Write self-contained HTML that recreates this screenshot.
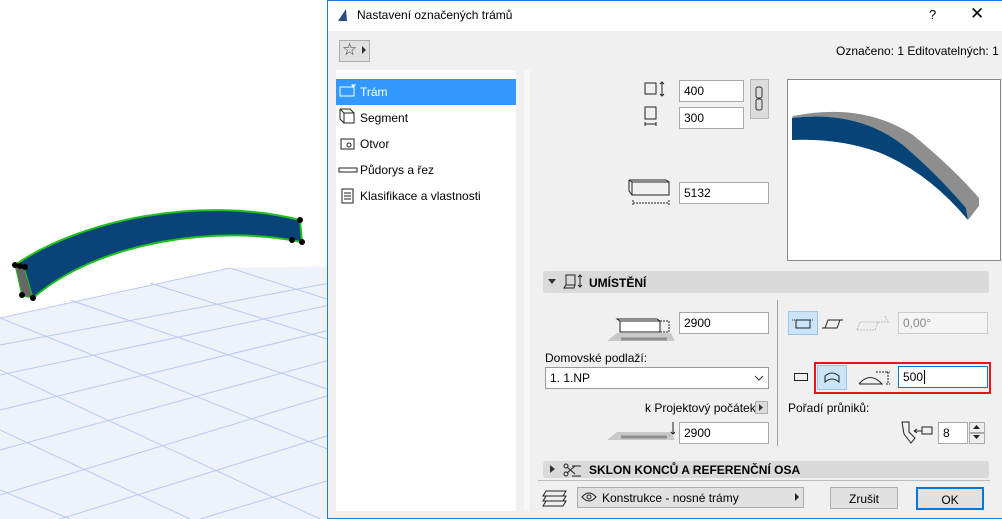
<!DOCTYPE html>
<html><head><meta charset="utf-8"><style>
*{box-sizing:border-box;margin:0;padding:0}
body{width:1002px;height:519px;overflow:hidden;position:relative;background:#fff;font-family:"Liberation Sans",sans-serif;font-size:12px;color:#000}
.a{position:absolute}
.f{position:absolute;background:#fff;border:1px solid #a8a8a8;padding:3px 0 0 4px;font-size:12px;height:22px}
.hdr{position:absolute;background:#dadada;border-radius:3px;font-weight:bold;font-size:12px}
.it{position:absolute;left:336px;width:180px;height:26px;line-height:26px;padding-left:24px;font-size:12px}
.btn{position:absolute;background:#e1e1e1;border:1px solid #adadad;text-align:center;font-size:12px}
</style></head><body>
<svg class="a" style="left:0;top:0" width="330" height="519">
<polygon points="0,318 230,268 330,266 330,519 0,519" fill="#eef2fb"/>
<g stroke="#b9c9f2" stroke-width="1" fill="none">
<line x1="0" y1="318" x2="230" y2="268"/>
<line x1="0" y1="345" x2="330" y2="283"/>
<line x1="0" y1="375" x2="330" y2="305"/>
<line x1="0" y1="410" x2="330" y2="330"/>
<line x1="0" y1="450" x2="330" y2="360"/>
<line x1="0" y1="495" x2="330" y2="395"/>
<line x1="60" y1="519" x2="330" y2="435"/>
<line x1="200" y1="519" x2="330" y2="480"/>
<line x1="230" y1="268" x2="330" y2="300"/>
<line x1="150" y1="283" x2="330" y2="340"/>
<line x1="70" y1="300" x2="330" y2="390"/>
<line x1="0" y1="318" x2="330" y2="450"/>
<line x1="0" y1="370" x2="320" y2="519"/>
<line x1="0" y1="430" x2="190" y2="519"/>
<line x1="0" y1="490" x2="70" y2="519"/>
</g>
<path d="M15,265 C80,220 200,195 300,220 L302,242 C220,225 100,240 33,298 Z" fill="#0a4378" stroke="#1ec21e" stroke-width="2"/>
<path d="M15,265 L24,267 L33,298 L22,296 Z" fill="#666" stroke="#1ec21e"/>
<g fill="#000"><circle cx="15" cy="265" r="3"/><circle cx="20" cy="266" r="3"/><circle cx="25" cy="267" r="3"/><circle cx="22" cy="295" r="3"/><circle cx="33" cy="298" r="3"/><circle cx="300" cy="220" r="3"/><circle cx="292" cy="240" r="3"/><circle cx="302" cy="242" r="3"/></g>
</svg>
<div class="a" style="left:327px;top:0;width:675px;height:519px;background:#f0f0f0;border-left:1px solid #1e7bd6;border-top:1px solid #1e7bd6;border-bottom:1px solid #1e7bd6"></div>
<div class="a" style="left:328px;top:1px;width:674px;height:30px;background:#fff"></div>
<svg class="a" style="left:336px;top:8px" width="14" height="14"><path d="M2,13 L10,1 L11,13 Z" fill="#2b4e7e"/></svg>
<div class="a" style="left:357px;top:8px;font-size:12px">Nastavení označených trámů</div>
<div class="a" style="left:929px;top:7px;font-size:13px">?</div>
<div class="a" style="left:970px;top:4px;font-size:17px">✕</div>
<div class="a" style="left:339px;top:40px;width:31px;height:22px;border:1px solid #adadad;background:#e1e1e1"></div>
<div class="a" style="left:342px;top:40px;font-size:17px;color:#333">☆</div>
<svg class="a" style="left:362px;top:46px" width="5" height="8"><path d="M0,0 L4,4 L0,8Z" fill="#333"/></svg>
<div class="a" style="left:836px;top:44px;font-size:12px">Označeno: 1 Editovatelných: 1</div>
<div class="a" style="left:336px;top:70px;width:180px;height:441px;background:#fff"></div>
<div class="a" style="left:524px;top:70px;width:6px;height:441px;background:#f7f7f7"></div>
<div class="it" style="top:79px;background:#3399ff;color:#fff">Trám</div>
<div class="it" style="top:105px">Segment</div>
<div class="it" style="top:131px">Otvor</div>
<div class="it" style="top:157px">Půdorys a řez</div>
<div class="it" style="top:183px">Klasifikace a vlastnosti</div>
<svg class="a" style="left:338px;top:82px" width="22" height="128" fill="none" stroke="#222">
<rect x="2" y="5" width="14" height="9" stroke="#fff"/><path d="M14,3 l3,0 l-1.5,2z" fill="#fff" stroke="#fff"/>
<rect x="6" y="31" width="10" height="10"/><path d="M2,27 l4,4 M2,27 v10 l4,4 M2,27 h10 l4,4"/>
<rect x="3" y="57" width="13" height="10"/><circle cx="11" cy="63" r="2"/>
<rect x="1" y="86" width="18" height="4"/>
<rect x="4" y="107" width="11" height="14"/><path d="M6,111h7M6,114h7M6,117h7"/>
</svg>
<div class="f" style="left:679px;top:80px;width:65px">400</div>
<div class="f" style="left:679px;top:107px;width:65px">300</div>
<div class="a" style="left:750px;top:79px;width:19px;height:40px;background:#dcdcdc;border:1px solid #b8b8b8"></div>
<svg class="a" style="left:753px;top:86px" width="12" height="26" fill="none" stroke="#333"><rect x="3" y="1" width="6" height="11" rx="2"/><rect x="3" y="13" width="6" height="11" rx="2"/></svg>
<svg class="a" style="left:640px;top:80px" width="32" height="54" fill="none" stroke="#222"><rect x="5" y="3" width="11" height="11"/><path d="M22,2v14M20,4l2,-2 2,2M20,14l2,2 2,-2"/><rect x="5" y="27" width="11" height="12"/><path d="M5,44h11M5,42v4M16,42v4"/></svg>
<div class="f" style="left:679px;top:182px;width:90px">5132</div>
<svg class="a" style="left:628px;top:177px" width="46" height="32" fill="none" stroke="#222"><rect x="4" y="5" width="37" height="13"/><path d="M1,3l3,2M1,3v11l3,4M1,3h37l3,2"/><path d="M5,26h36M5,23v6M41,23v6" stroke-dasharray="2,1"/></svg>
<div class="a" style="left:787px;top:79px;width:214px;height:182px;background:#fff;border:1px solid #888"></div>
<svg class="a" style="left:788px;top:80px" width="212" height="180">
<path d="M5,36 Q75,22 125,55 Q165,88 191,118 L191,126 L180,140 L178,128 Q150,95 115,65 Q70,30 4,38 Z" fill="#8e8e8e"/>
<path d="M4,38 Q70,30 115,65 Q150,95 178,128 L180,140 Q140,92 90,72 Q50,58 4,60 Z" fill="#064478"/></svg>
<div class="hdr" style="left:543px;top:271px;width:446px;height:22px"></div>
<svg class="a" style="left:548px;top:279px" width="8" height="6"><path d="M0,0h8L4,5z" fill="#333"/></svg>
<svg class="a" style="left:563px;top:273px" width="22" height="18" fill="none" stroke="#222"><rect x="3" y="2" width="9" height="10"/><path d="M3,12l-2,3h10l1,-3M17,2v12M15,4l2,-2 2,2M15,12l2,2 2,-2"/></svg>
<div class="a" style="left:589px;top:276px;font-weight:bold">UMÍSTĚNÍ</div>
<div class="a" style="left:777px;top:300px;width:1px;height:146px;background:#a0a0a0"></div>
<svg class="a" style="left:605px;top:313px" width="70" height="32"><path d="M2,28 L12,20 H66 L70,28Z" fill="#c8c8c8"/><path d="M16,26h46" stroke="#8f8f8f" stroke-width="3"/><g fill="#fff" stroke="#222"><rect x="15" y="8" width="40" height="11"/><path d="M12,6h40l3,2H15z"/></g><path d="M55,8h9M55,19h9M64,8v11" stroke="#222" fill="none" stroke-dasharray="2,1"/></svg>
<div class="f" style="left:679px;top:312px;width:90px">2900</div>
<div class="a" style="left:545px;top:351px">Domovské podlaží:</div>
<div class="f" style="left:545px;top:367px;width:224px;height:22px;border-color:#999">1. 1.NP</div>
<svg class="a" style="left:754px;top:375px" width="10" height="6" fill="none" stroke="#333"><path d="M1,1l4,4 4,-4"/></svg>
<div class="a" style="left:645px;top:401px">k Projektový počátek</div>
<div class="a" style="left:755px;top:401px;width:13px;height:13px;background:#dcdcdc;border:1px solid #b0b0b0"></div>
<svg class="a" style="left:759px;top:404px" width="5" height="7"><path d="M0,0l4,3.5L0,7z" fill="#333"/></svg>
<svg class="a" style="left:605px;top:420px" width="70" height="24"><path d="M2,20 L12,12 H66 L70,20Z" fill="#c8c8c8"/><path d="M16,17h46" stroke="#8f8f8f" stroke-width="3"/><path d="M68,2v12M66,12l2,2 2,-2" stroke="#222" fill="none"/></svg>
<div class="f" style="left:679px;top:422px;width:90px">2900</div>
<div class="a" style="left:788px;top:311px;width:30px;height:24px;background:#cce4f7;border:1px solid #99c6ee"></div>
<svg class="a" style="left:792px;top:318px" width="60" height="12" fill="none" stroke="#222"><rect x="4" y="2" width="14" height="8"/><path d="M0,2h4M18,2h4" stroke-dasharray="1,1"/><path d="M33,10l3,-8h12l-3,8z"/><path d="M30,10h3M48,2h3"/></svg>
<svg class="a" style="left:855px;top:314px" width="40" height="20" fill="none" stroke="#bbb"><path d="M2,16l3,-8h18l-3,8z M23,8h12M30,2l3,6" stroke-dasharray="2,1"/></svg>
<div class="f" style="left:898px;top:312px;width:90px;border-color:#ccc;color:#888;background:#f4f4f4">0,00°</div>
<div class="a" style="left:814px;top:362px;width:177px;height:32px;border:2px solid #e8141c"></div>
<div class="a" style="left:794px;top:373px;width:14px;height:8px;border:1px solid #222"></div>
<div class="a" style="left:817px;top:365px;width:30px;height:25px;background:#cce4f7;border:1px solid #99c6ee"></div>
<svg class="a" style="left:824px;top:370px" width="16" height="14" fill="none" stroke="#222"><path d="M1,12V6Q8,0 15,6V12Q8,6 1,12Z"/></svg>
<svg class="a" style="left:858px;top:369px" width="34" height="18" fill="none" stroke="#222"><path d="M1,15Q12,2 24,15H1"/><path d="M18,3h12M30,3v12M28,3h4M28,15h4" stroke-dasharray="2,1"/></svg>
<div class="f" style="left:898px;top:366px;width:90px;border-color:#0078d7">500<span style="border-left:1px solid #000;margin-left:1px"></span></div>
<div class="a" style="left:788px;top:401px">Pořadí průniků:</div>
<svg class="a" style="left:900px;top:420px" width="36" height="24" fill="none" stroke="#222"><path d="M2,2h7v10l6,6-4,5-7-9z"/><path d="M14,11h8M14,11l3,-2M14,11l3,2"/><rect x="22" y="7" width="10" height="7"/></svg>
<div class="f" style="left:938px;top:422px;width:30px">8</div>
<div class="a" style="left:969px;top:422px;width:16px;height:11px;border:1px solid #aaa;background:#eee"></div>
<div class="a" style="left:969px;top:433px;width:16px;height:11px;border:1px solid #aaa;background:#eee"></div>
<svg class="a" style="left:973px;top:425px" width="8" height="16"><path d="M0,4h7L3.5,0z M0,10h7L3.5,14z" fill="#222"/></svg>
<div class="hdr" style="left:543px;top:461px;width:446px;height:17px"></div>
<svg class="a" style="left:550px;top:465px" width="6" height="8"><path d="M0,0l5,4L0,8z" fill="#333"/></svg>
<svg class="a" style="left:562px;top:462px" width="20" height="16" fill="none" stroke="#222"><circle cx="4" cy="12" r="2"/><circle cx="4" cy="4" r="2"/><path d="M5,11l8,-7M5,5l8,7M10,4h9M10,14h9"/></svg>
<div class="a" style="left:589px;top:463px;font-weight:bold">SKLON KONCŮ A REFERENČNÍ OSA</div>
<div class="a" style="left:538px;top:480px;width:452px;height:1px;background:#bbb"></div>
<svg class="a" style="left:541px;top:488px" width="28" height="20" fill="none" stroke="#222"><path d="M5,3h20l-3,5H2z M5,8h20l-3,5H2z M5,13h20l-3,5H2z"/></svg>
<div class="btn" style="left:577px;top:487px;width:227px;height:21px;text-align:left;padding:3px 0 0 24px">Konstrukce - nosné trámy</div>
<svg class="a" style="left:581px;top:491px" width="16" height="12" fill="none" stroke="#222"><path d="M1,6Q8,-2 15,6Q8,14 1,6z"/><circle cx="8" cy="6" r="2"/></svg>
<svg class="a" style="left:795px;top:493px" width="5" height="8"><path d="M0,0l4,4L0,8z" fill="#222"/></svg>
<div class="btn" style="left:830px;top:487px;width:68px;height:22px;padding-top:4px">Zrušit</div>
<div class="btn" style="left:916px;top:487px;width:68px;height:23px;padding-top:4px;border:2px solid #0078d7">OK</div>
</body></html>
